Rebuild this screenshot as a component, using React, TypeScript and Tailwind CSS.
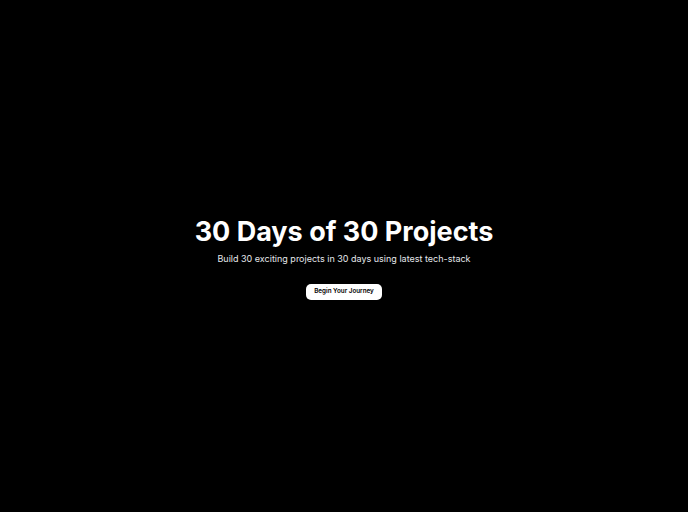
export default function App() {
  return (
    <div className="flex h-screen w-full flex-col items-center justify-center bg-black pt-[5px] text-white" style={{ fontFamily: "Inter, sans-serif" }}>
      <h1 className="text-[27px] font-bold leading-none">30 Days of 30 Projects</h1>
      <p className="mt-[7px] text-[9px] leading-[13.5px] text-gray-200">Build 30 exciting projects in 30 days using latest tech-stack</p>
      <button className="mt-[18.5px] flex h-[16px] items-center rounded-[5px] bg-white px-[8px] text-[6.3px] font-semibold leading-none text-black">Begin Your Journey</button>
    </div>
  );
}
